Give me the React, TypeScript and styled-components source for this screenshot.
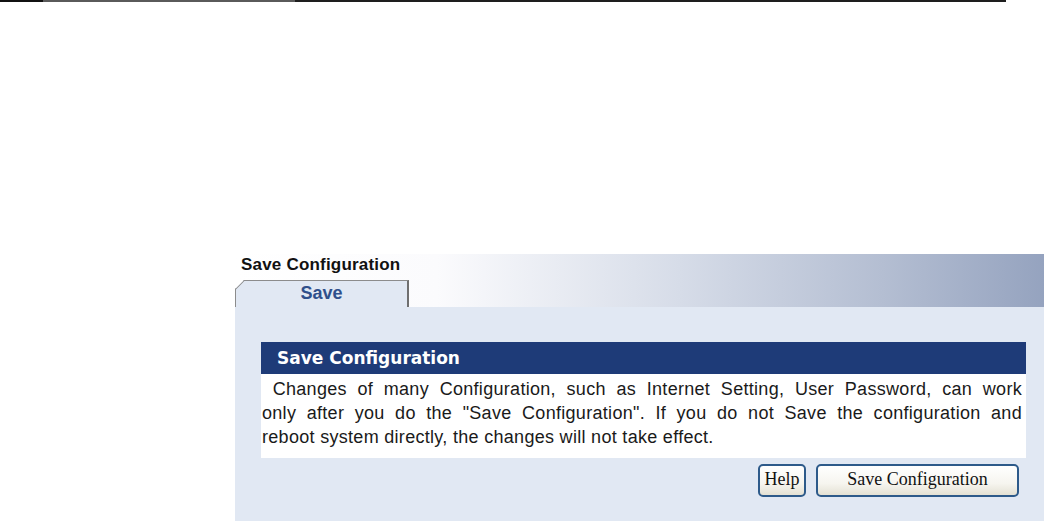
import React from 'react';
import styled, { createGlobalStyle } from 'styled-components';

const GlobalStyle = createGlobalStyle`
  html, body {
    margin: 0;
    padding: 0;
    background: #ffffff;
  }
  body {
    font-family: "Liberation Sans", Arial, sans-serif;
    width: 1044px;
    height: 521px;
    overflow: hidden;
  }
`;

const Page = styled.div`
  width: 1044px;
  height: 521px;
  display: flex;
  flex-direction: column;
`;

const TopRule = styled.div`
  display: flex;
  height: 2px;
`;

const RuleSegment = styled.div<{ $width: number; $color: string }>`
  width: ${(p) => p.$width}px;
  height: 2px;
  background: ${(p) => p.$color};
`;

const Content = styled.div`
  margin-top: 252px;
  margin-left: 235px;
  flex: 1;
  display: flex;
  flex-direction: column;
`;

const Banner = styled.div`
  height: 53px;
  display: flex;
  flex-direction: column;
  justify-content: space-between;
  background: linear-gradient(to right, #ffffff 0%, #fbfbfd 25%, #d6dce8 55%, #b4bed2 80%, #95a3bf 100%);
`;

const PageTitle = styled.div`
  font-weight: bold;
  font-size: 17px;
  letter-spacing: 0.2px;
  color: #111111;
  padding: 2px 0 0 6px;
  line-height: 18px;
`;

const TabRow = styled.div`
  display: flex;
`;

const Tab = styled.div`
  position: relative;
  width: 174px;
  height: 27px;
  box-sizing: border-box;
  border-top: 1px solid #8c8c8c;
  border-right: 2px solid #6f6f6f;
  border-left: 1px solid #8c8c8c;
  background: #e1e8f3;
  font-weight: bold;
  font-size: 18px;
  color: #2f4f8b;
  display: flex;
  align-items: center;
  justify-content: center;
  padding-bottom: 2px;
  clip-path: polygon(9px 0, 100% 0, 100% 100%, 0 100%, 0 9px);

  &::before {
    content: '';
    position: absolute;
    left: -1px;
    top: -1px;
    width: 13px;
    height: 1px;
    background: #8c8c8c;
    transform-origin: 0 0;
    transform: translate(0, 9px) rotate(-45deg);
  }
`;

const Panel = styled.div`
  flex: 1;
  background: #e1e8f3;
  padding: 35px 18px 0 26px;
  display: flex;
  flex-direction: column;
`;

const SectionHeader = styled.div`
  height: 32px;
  background: #1e3b78;
  color: #ffffff;
  font-family: "DejaVu Sans", Verdana, sans-serif;
  font-weight: bold;
  font-size: 17px;
  display: flex;
  align-items: center;
  padding-left: 16px;
`;

const SectionBody = styled.div`
  background: #ffffff;
  padding: 3px 4px 9px 1px;
  font-size: 18px;
  letter-spacing: 0.3px;
  line-height: 24px;
  color: #1a1a1a;
  text-align: justify;
`;

// the old page breaks these lines where the browser here would not, so each
// line is set on its own and stretched to the full width
const BodyLine = styled.span<{ $last?: boolean }>`
  display: block;
  text-align-last: ${(p) => (p.$last ? 'left' : 'justify')};
`;

const ButtonRow = styled.div`
  display: flex;
  justify-content: flex-end;
  gap: 10px;
  padding: 6px 7px 0 0;
`;

const Button = styled.button<{ $width: number }>`
  width: ${(p) => p.$width}px;
  height: 33px;
  font-family: "Liberation Serif", "Times New Roman", serif;
  font-size: 18px;
  color: #111111;
  background: linear-gradient(to bottom, #ffffff 0%, #f6f5ef 60%, #e4e1d4 100%);
  border: 2px solid #2d5a8a;
  border-radius: 5px;
  padding: 0 0 3px;
  cursor: pointer;
`;

const bodyLines = [
  '\u00a0Changes of many Configuration, such as Internet Setting, User Password, can work',
  'only after you do the "Save Configuration". If you do not Save the configuration and',
  'reboot system directly, the changes will not take effect.',
];

const App = () => {
  return (
    <>
      <GlobalStyle />
      <Page>
        <TopRule>
          <RuleSegment $width={43} $color="#111111" />
          <RuleSegment $width={252} $color="#5a5a5a" />
          <RuleSegment $width={711} $color="#1e1e1e" />
        </TopRule>
        <Content>
          <Banner>
            <PageTitle>Save Configuration</PageTitle>
            <TabRow>
              <Tab>Save</Tab>
            </TabRow>
          </Banner>
          <Panel>
            <SectionHeader>Save Configuration</SectionHeader>
            <SectionBody>
              {bodyLines.map((line, index) => (
                <BodyLine key={index} $last={index === bodyLines.length - 1}>
                  {line}
                </BodyLine>
              ))}
            </SectionBody>
            <ButtonRow>
              <Button $width={48}>Help</Button>
              <Button $width={203}>Save Configuration</Button>
            </ButtonRow>
          </Panel>
        </Content>
      </Page>
    </>
  );
};

export default App;
